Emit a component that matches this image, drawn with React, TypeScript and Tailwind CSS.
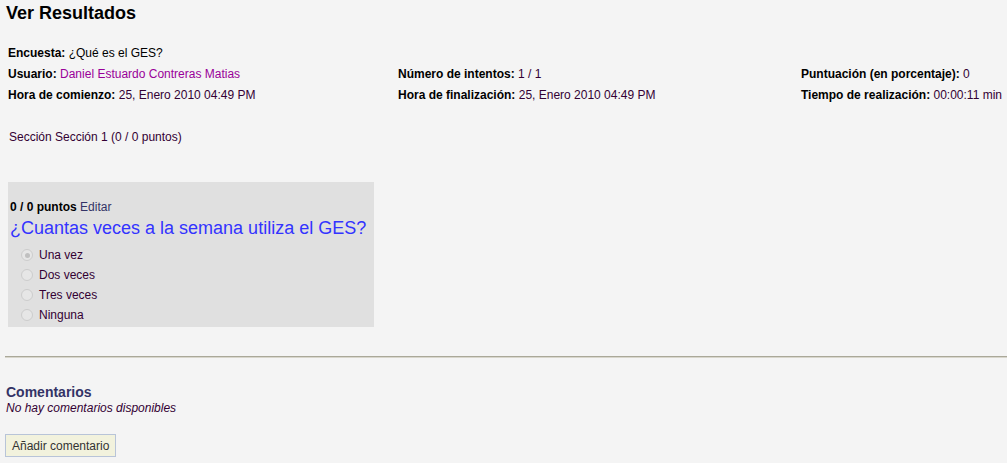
function Radio({ checked }: { checked?: boolean }) {
  return (
    <span className="w-[12px] h-[12px] rounded-full border border-[#cccccc] bg-[#e6e6e6] flex items-center justify-center">
      {checked && <span className="w-[5px] h-[5px] rounded-full bg-[#c0c0c0]" />}
    </span>
  );
}

function Field({ label, value, tone = 'text-[#330033]' }: { label: string; value: string; tone?: string }) {
  return (
    <div className="h-[21px] leading-[21px] whitespace-nowrap">
      <span className="font-bold text-black">{label}</span>{' '}
      <span className={tone}>{value}</span>
    </div>
  );
}

export default function App() {
  const options = ['Una vez', 'Dos veces', 'Tres veces', 'Ninguna'];
  return (
    <div className="min-h-[463px] bg-[#f4f4f4] text-[12px] text-black font-['Liberation_Sans',Arial,sans-serif]">
      <h1 className="pl-[6px] pt-[2px] text-[18px] leading-[22px] font-bold">Ver Resultados</h1>

      <div className="pl-[8px] mt-[19px]">
        <Field label="Encuesta:" value="¿Qué es el GES?" tone="text-black" />
        <div className="grid grid-cols-[390px_403px_1fr]">
          <div>
            <Field label="Usuario:" value="Daniel Estuardo Contreras Matias" tone="text-[#990099]" />
            <Field label="Hora de comienzo:" value="25, Enero 2010 04:49 PM" />
          </div>
          <div>
            <Field label="Número de intentos:" value="1 / 1" />
            <Field label="Hora de finalización:" value="25, Enero 2010 04:49 PM" />
          </div>
          <div>
            <Field label="Puntuación (en porcentaje):" value="0" />
            <Field label="Tiempo de realización:" value="00:00:11 min" />
          </div>
        </div>
      </div>

      <div className="pl-[9px] mt-[21px] leading-[21px] text-[#330033]">Sección Sección 1 (0 / 0 puntos)</div>

      <div className="ml-[8px] mt-[34px] w-[366px] h-[145px] bg-[#e0e0e0] pt-[17px] pl-[2px]">
        <div className="leading-[16px]">
          <span className="font-bold">0 / 0 puntos</span>{' '}
          <span className="text-[#333366]">Editar</span>
        </div>
        <div className="text-[18px] leading-[22px] text-[#3333ff] mt-[2px]">¿Cuantas veces a la semana utiliza el GES?</div>
        <div className="mt-[6px] pl-[11px]">
          {options.map((o, i) => (
            <div key={o} className="h-[20px] flex items-center gap-[6px] text-[#330033]">
              <Radio checked={i === 0} />
              <span>{o}</span>
            </div>
          ))}
        </div>
      </div>

      <div className="ml-[5px] mt-[29px] h-[2px] border-t border-[#aaa899] border-b border-b-[#d8d6cc]" />

      <div className="pl-[6px] mt-[26px]">
        <div className="text-[14px] leading-[16px] font-bold text-[#333366]">Comentarios</div>
        <div className="italic leading-[16px] text-[#330033]">No hay comentarios disponibles</div>
      </div>

      <button className="ml-[5px] mt-[18px] h-[23px] px-[6px] bg-[#f2f2dd] border border-[#b8c4d8] text-[12px] text-[#333333]">
        Añadir comentario
      </button>
    </div>
  );
}
